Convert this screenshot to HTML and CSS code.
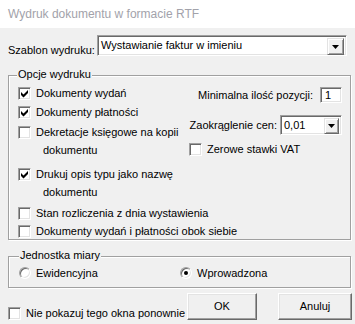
FILE: index.html
```html
<!DOCTYPE html>
<html lang="pl">
<head>
    <meta charset="UTF-8">
    <title>Wydruk dokumentu w formacie RTF</title>
    <link rel="stylesheet" href="styles.css">
</head>
<body>
    <div class="titlebar">Wydruk dokumentu w formacie RTF</div>

    <div class="dialog">
        <div class="template-row">
            <span class="template-label">Szablon wydruku:</span>
            <div class="combo combo-wide">
                <span class="combo-text">Wystawianie faktur w imieniu</span>
                <span class="drop-btn"><svg width="7" height="4" viewBox="0 0 7 4"><polygon points="0,0 7,0 3.5,4" fill="#000"/></svg></span>
            </div>
        </div>

        <div class="group group-options">
            <span class="legend">Opcje wydruku</span>
            <div class="options-top">
                <div class="options-left">
                    <div class="check">
                        <span class="box"><svg width="11" height="11" viewBox="0 0 11 11"><polygon points="2,4 4.5,6.5 9,2 9,5 4.5,9.5 2,7" fill="#000"/></svg></span>
                        <span class="check-text">Dokumenty wydań</span>
                    </div>
                    <div class="check gap-1">
                        <span class="box"><svg width="11" height="11" viewBox="0 0 11 11"><polygon points="2,4 4.5,6.5 9,2 9,5 4.5,9.5 2,7" fill="#000"/></svg></span>
                        <span class="check-text">Dokumenty płatności</span>
                    </div>
                    <div class="check gap-2">
                        <span class="box"></span>
                        <span class="check-text">Dekretacje księgowe na kopii<span class="cont">dokumentu</span></span>
                    </div>
                    <div class="check gap-6">
                        <span class="box"><svg width="11" height="11" viewBox="0 0 11 11"><polygon points="2,4 4.5,6.5 9,2 9,5 4.5,9.5 2,7" fill="#000"/></svg></span>
                        <span class="check-text">Drukuj opis typu jako nazwę<span class="cont">dokumentu</span></span>
                    </div>
                </div>

                <div class="options-right">
                    <div class="num-row">
                        <span>Minimalna ilość pozycji:</span>
                        <span class="field num-field">1</span>
                    </div>
                    <div class="round-row">
                        <span>Zaokrąglenie cen:</span>
                        <div class="combo combo-small">
                            <span class="combo-text">0,01</span>
                            <span class="drop-btn"><svg width="7" height="4" viewBox="0 0 7 4"><polygon points="0,0 7,0 3.5,4" fill="#000"/></svg></span>
                        </div>
                    </div>
                    <div class="check vat-row">
                        <span class="box"></span>
                        <span class="check-text">Zerowe stawki VAT</span>
                    </div>
                </div>
            </div>

            <div class="check gap-3">
                <span class="box"></span>
                <span class="check-text">Stan rozliczenia z dnia wystawienia</span>
            </div>
            <div class="check">
                <span class="box"></span>
                <span class="check-text">Dokumenty wydań i płatności obok siebie</span>
            </div>
        </div>

        <div class="group group-unit">
            <span class="legend legend-unit">Jednostka miary</span>
            <div class="radio-row">
                <div class="radio-item first">
                    <span class="radio"></span>
                    <span>Ewidencyjna</span>
                </div>
                <div class="radio-item">
                    <span class="radio selected"></span>
                    <span>Wprowadzona</span>
                </div>
            </div>
        </div>

        <div class="footer">
            <div class="check footer-check">
                <span class="box"></span>
                <span class="check-text">Nie pokazuj tego okna ponownie</span>
            </div>
            <div class="buttons">
                <span class="btn btn-ok">OK</span>
                <span class="btn btn-cancel">Anuluj</span>
            </div>
        </div>
    </div>
</body>
</html>
```

FILE: styles.css
```css
body {
    margin: 0;
    width: 355px;
    height: 324px;
    overflow: hidden;
    background-color: #f0f0f0;
    font-family: "Liberation Sans", Arial, sans-serif;
    font-size: 11px;
    color: #000;
}
.titlebar {
    height: 28px;
    line-height: 28px;
    padding-left: 8px;
    background-color: #fff;
    color: #a2a2aa;
    font-size: 12px;
}
.dialog {
    padding: 0 4px 0 8px;
}

/* sunken 3D edge used by fields, boxes and combos */
.field,
.combo,
.box,
.radio {
    box-sizing: border-box;
    background-color: #fff;
    border: 1px solid;
    border-color: #a0a0a0 #fff #fff #a0a0a0;
    box-shadow: inset 1px 1px #696969, inset -1px -1px #e3e3e3;
}

.template-row {
    display: flex;
    justify-content: space-between;
    align-items: flex-start;
    margin-top: 7px;
    height: 21px;
}
.template-label {
    margin-top: 9px;
    line-height: 13px;
}
.combo {
    display: flex;
    align-items: flex-start;
    padding: 1px;
}
.combo-wide {
    width: 250px;
    height: 21px;
    margin-right: 4px;
}
.combo-small {
    width: 62px;
    height: 20px;
}
.combo-text {
    flex: 1;
    padding-left: 2px;
    line-height: 15px;
    margin-top: 1px;
}
.drop-btn {
    box-sizing: border-box;
    display: flex;
    align-items: center;
    justify-content: center;
    width: 17px;
    height: 17px;
    margin-top: 1px;
    margin-right: 1px;
    background-color: #f0f0f0;
    border: 1px solid;
    border-color: #e3e3e3 #696969 #696969 #e3e3e3;
    box-shadow: inset 1px 1px #fff, inset -1px -1px #a0a0a0;
}
.combo-small .drop-btn {
    width: 15px;
    height: 16px;
}

.group {
    position: relative;
    box-sizing: border-box;
    border: 1px solid #a0a0a0;
    box-shadow: inset 1px 1px #fff, 1px 1px #fff;
}
.group-options {
    margin-top: 19px;
    height: 165px;
    padding: 8px 8px 0 9px;
}
.legend {
    position: absolute;
    top: -8px;
    left: 8px;
    padding: 0 1px;
    line-height: 13px;
    background-color: #f0f0f0;
}
.legend-unit {
    left: 10px;
}

.options-top {
    display: flex;
    justify-content: space-between;
}
.options-right {
    width: 155px;
    display: flex;
    flex-direction: column;
    align-items: flex-end;
}

.check {
    display: flex;
    align-items: flex-start;
    line-height: 18px;
}
.box {
    flex: none;
    display: flex;
    width: 13px;
    height: 13px;
    margin: 3px 5px 0 0;
}
.check-text {
    white-space: nowrap;
}
.cont {
    display: block;
    padding-left: 7px;
}
.gap-1 { margin-top: 1px; }
.gap-2 { margin-top: 2px; }
.gap-3 { margin-top: 3px; }
.gap-6 { margin-top: 6px; }

.num-row {
    display: flex;
    align-items: center;
    gap: 7px;
    margin-top: 3px;
    height: 16px;
}
.num-field {
    width: 22px;
    height: 16px;
    padding-left: 4px;
    line-height: 14px;
}
.round-row {
    display: flex;
    align-items: center;
    gap: 3px;
    margin-top: 12px;
}
.vat-row {
    align-self: flex-start;
    margin: 5px 0 0 2px;
}

.group-unit {
    margin-top: 16px;
    height: 32px;
    padding: 7px 0 0 10px;
}
.radio-row {
    display: flex;
    line-height: 18px;
}
.radio-item {
    display: flex;
    align-items: center;
    gap: 5px;
}
.radio-item.first {
    width: 161px;
}
.radio {
    display: flex;
    align-items: center;
    justify-content: center;
    width: 12px;
    height: 12px;
    border-radius: 50%;
}
.radio.selected::after {
    content: "";
    width: 4px;
    height: 4px;
    border-radius: 50%;
    background-color: #000;
}

.footer {
    display: flex;
    justify-content: space-between;
    align-items: flex-start;
    margin-top: 5px;
}
.footer-check {
    margin-top: 11px;
}
.buttons {
    display: flex;
    gap: 21px;
    margin-right: -1px;
}
.btn {
    box-sizing: border-box;
    height: 27px;
    line-height: 25px;
    text-align: center;
    background-color: #f0f0f0;
    border: 1px solid;
    border-color: #fff #696969 #696969 #fff;
    box-shadow: inset -1px -1px #a0a0a0, inset 1px 1px #e3e3e3;
}
.btn-ok {
    width: 70px;
}
.btn-cancel {
    width: 74px;
}
```
